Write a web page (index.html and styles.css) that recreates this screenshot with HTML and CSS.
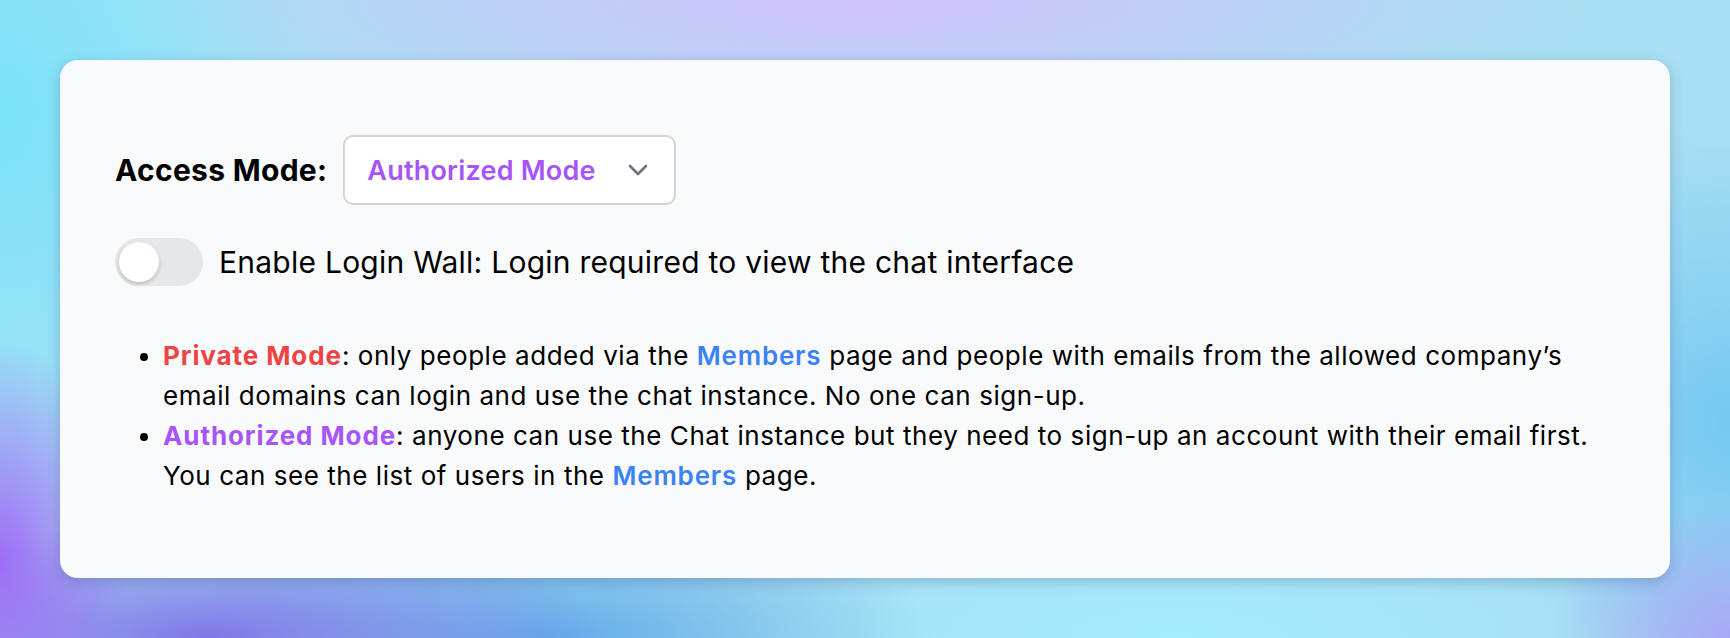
FILE: index.html
```html
<!DOCTYPE html>
<html>
<head>
    <title>Access Settings</title>
    <link rel="stylesheet" href="styles.css">
</head>
<body>
    <div class="card">
        <div class="access-row">
            <label class="access-label" for="accessMode">Access Mode:</label>
            <div class="select" id="accessMode">
                <span class="select-value">Authorized Mode</span>
                <svg class="chevron" width="20" height="12" viewBox="0 0 20 12">
                    <path d="M2 2 L10 10 L18 2" fill="none" stroke="#6b7280" stroke-width="2.6" stroke-linecap="round" stroke-linejoin="round"/>
                </svg>
            </div>
        </div>

        <div class="toggle-row">
            <div class="toggle">
                <div class="knob"></div>
            </div>
            <span class="toggle-label">Enable Login Wall: Login required to view the chat interface</span>
        </div>

        <ul class="mode-list">
            <li><span class="private">Private Mode</span>: only people added via the <span class="link">Members</span> page and people with emails from the allowed company’s email domains can login and use the chat instance. No one can sign-up.</li>
            <li><span class="authorized">Authorized Mode</span>: anyone can use the Chat instance but they need to sign-up an account with their email first. You can see the list of users in the <span class="link">Members</span> page.</li>
        </ul>
    </div>
</body>
</html>
```

FILE: styles.css
```css
html, body {
    height: 100%;
}
body {
    margin: 0;
    padding: 60px;
    box-sizing: border-box;
    font-family: Inter, "Noto Sans", sans-serif;
    color: #000;
    background-color: #a9dff2;
    background-image:
        radial-gradient(ellipse 130px 220px at 0% 88%, rgba(158, 108, 245, 1), rgba(158, 108, 245, 0) 100%),
        radial-gradient(ellipse 400px 120px at 12% 100%, rgba(128, 118, 232, 1), rgba(128, 118, 232, 0) 100%),
        radial-gradient(ellipse 180px 140px at 100% 100%, rgba(170, 165, 245, 0.95), rgba(170, 165, 245, 0) 100%),
        radial-gradient(ellipse 720px 140px at 50% 0%, rgba(208, 192, 250, 1), rgba(208, 192, 250, 0) 100%),
        radial-gradient(ellipse 380px 130px at 32% 100%, rgba(96, 170, 232, 0.95), rgba(96, 170, 232, 0) 100%),
        radial-gradient(ellipse 460px 130px at 68% 100%, rgba(165, 238, 252, 1), rgba(165, 238, 252, 0) 100%),
        radial-gradient(ellipse 320px 420px at 0% 18%, rgba(124, 228, 250, 1), rgba(124, 228, 250, 0) 100%),
        radial-gradient(ellipse 260px 300px at 100% 66%, rgba(118, 200, 242, 1), rgba(118, 200, 242, 0) 100%);
}
.card {
    background-color: #f9fafb;
    border-radius: 18px;
    padding: 75px 55px 82px;
    height: 518px;
    box-sizing: border-box;
    box-shadow: 0 4px 14px rgba(40, 60, 120, 0.25);
}
.access-row {
    display: flex;
    align-items: center;
    gap: 16px;
}
.access-label {
    font-size: 30px;
    font-weight: 700;
    letter-spacing: 0.3px;
}
.select {
    display: flex;
    align-items: center;
    justify-content: space-between;
    width: 333px;
    height: 70px;
    box-sizing: border-box;
    padding: 0 26px 0 22px;
    background-color: white;
    border: 2px solid #d1d5db;
    border-radius: 10px;
}
.select-value {
    font-size: 27px;
    font-weight: 600;
    letter-spacing: 0.2px;
    color: #a855f7;
}
.chevron {
    display: block;
}
.toggle-row {
    display: flex;
    align-items: center;
    gap: 16px;
    margin-top: 33px;
}
.toggle {
    width: 88px;
    height: 48px;
    border-radius: 24px;
    background-color: #e5e7eb;
    padding: 4px;
    box-sizing: border-box;
}
.knob {
    width: 40px;
    height: 40px;
    border-radius: 50%;
    background-color: white;
    box-shadow: 0 2px 4px rgba(0, 0, 0, 0.2);
}
.toggle-label {
    font-size: 30px;
    letter-spacing: 0.25px;
}
.mode-list {
    margin: 50px 0 0;
    padding-left: 48px;
    font-size: 26px;
    line-height: 40px;
    letter-spacing: 0.55px;
}
.mode-list li::marker {
    letter-spacing: 0;
}
.private {
    color: #ef4444;
    font-weight: 700;
    letter-spacing: 0.9px;
}
.authorized {
    color: #a855f7;
    font-weight: 700;
    letter-spacing: 0.9px;
}
.link {
    color: #3b82f6;
    font-weight: 600;
    letter-spacing: 0.8px;
}
```
